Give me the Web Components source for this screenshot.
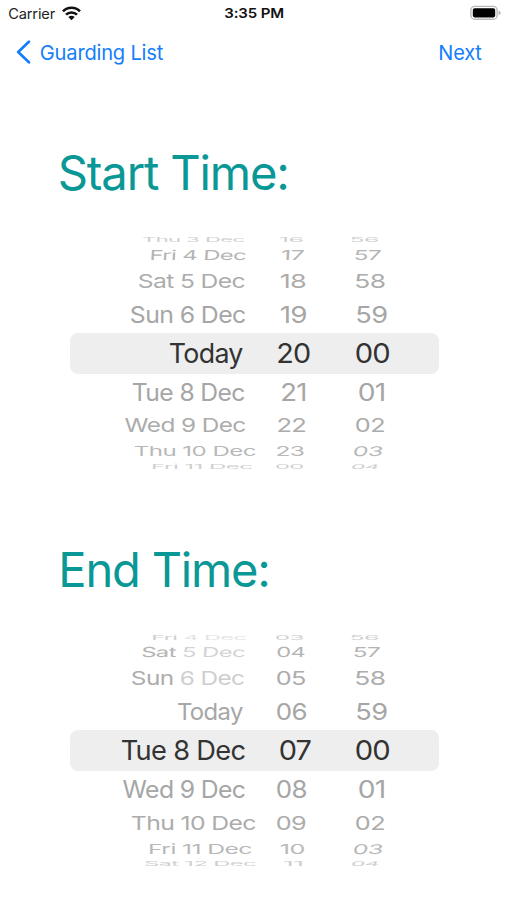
<!DOCTYPE html>
<html lang="en">
<head>
<meta charset="utf-8">
<title>Guarding time</title>
<style>
html,body{margin:0;background:#fff}
body{font-family:Inter,"Liberation Sans",sans-serif}
</style>
</head>
<body>
<time-screen></time-screen>
<script>
const ctx = document.createElement('canvas').getContext('2d');

/* One line of text, scaled so its ink spans the given width and its capitals the given height. */
class FitText extends HTMLElement {
  connectedCallback() {
    const w = +this.getAttribute('w'), h = +this.getAttribute('h');
    const weight = this.getAttribute('weight') || 400;
    const skew = +(this.getAttribute('skew') || 0);
    const fs = h > 21 ? 48 : h < 16 && this.hasAttribute('small') ? h / .727 : 27;
    const track = this.hasAttribute('small') ? -.01 : -.025;
    /* measured at ten times the size: ink bounds come back in whole pixels */
    ctx.font = `${weight} ${fs * 10}px Inter, "Liberation Sans", sans-serif`;
    ctx.letterSpacing = `${track * fs * 10}px`;
    const m = ctx.measureText(this.textContent);
    const left = -m.actualBoundingBoxLeft / 10, ink = m.actualBoundingBoxRight / 10 - left;
    const sx = w / ink, sy = h / (fs * .727);
    const asc = Math.round(.96875 * fs), desc = Math.round(.2412 * fs);
    const base = (fs - asc - desc) / 2 + asc;
    const root = this.attachShadow({mode: 'open'});
    root.innerHTML = `<style>
      :host{display:block;flex:none;width:${w}px;height:${h}px}
      span{display:block;width:max-content;white-space:pre;font-size:${fs}px;line-height:${fs}px;font-weight:${weight};letter-spacing:${track}em;
        transform-origin:${left}px ${base}px;
        transform:translate(${-left}px,${h - base + (fs < 15 ? 0 : .45)}px) scale(${sx},${sy}) skewX(${skew}deg)}
      ::slotted(b){font-weight:inherit;opacity:.58}
    </style><span><slot></slot></span>`;
  }
}
customElements.define('fit-text', FitText);

customElements.define('status-bar', class extends HTMLElement {
  connectedCallback() {
    this.attachShadow({mode: 'open'}).innerHTML = `<style>
      :host{display:grid;grid-template-columns:225px 1fr auto;height:28px;box-sizing:border-box;padding:0 5px 0 0;color:#111}
      .l{display:flex;padding:8.8px 0 0 9.3px;color:#222}
      .l svg{margin:-3px 0 0 6.5px}
      .c{padding-top:9.2px}
      .r{padding-top:5px}
      svg{display:block}
    </style>
    <div class="l"><fit-text small w="46" h="10.2">Carrier</fit-text>
      <svg width="19" height="15" viewBox="0 0 19 15" fill="none" stroke="#111" stroke-width="2.600">
        <path d="M1 5.3C5.6 .6 13.400 .6 18 5.3"/><path d="M4 8.700C7 5.700 12 5.700 15 8.700"/>
        <path d="M9.500 14.200L6.300 11Q9.500 8.600 12.700 11Z" fill="#111" stroke="none"/></svg></div>
    <div class="c"><fit-text small w="58" h="10" weight="600">3:35 PM</fit-text></div>
    <div class="r"><svg width="32" height="16" viewBox="0 0 32 16">
      <rect x=".9" y="1.400" width="26.200" height="12.800" rx="3.800" fill="#fff" stroke="#b9b9b9" stroke-width="1.400"/>
      <rect x="2.800" y="3.200" width="22.400" height="9.200" rx="1.800" fill="#000"/>
      <path d="M28.600 5.600Q30.600 6.400 30.600 7.900T28.600 10.200Z" fill="#b0b0b0"/></svg></div>`;
  }
});

customElements.define('nav-bar', class extends HTMLElement {
  connectedCallback() {
    this.attachShadow({mode: 'open'}).innerHTML = `<style>
      :host{display:flex;justify-content:space-between;height:48px;box-sizing:border-box;padding:17.2px 25.5px 0 16px;color:#147efb}
      .back{display:flex}
      svg{display:block;margin:-5px 9.300px 0 0}
    </style>
    <div class="back"><svg width="16" height="24" viewBox="0 0 16 24" fill="none" stroke="#147efb" stroke-width="2.700" stroke-linecap="round" stroke-linejoin="round"><path d="M12.900 1.800L2.200 12L12.900 22.200"/></svg>
    <fit-text small w="122" h="14.800">Guarding List</fit-text></div>
    <fit-text small w="41.500" h="14.800">Next</fit-text>`;
  }
});

/* Vertical extent and tint of each wheel row: [top, cap height, colour, skew], from the wheel's top. */
const ROWS = [
  [.2, 4.8, '#cfcfcf', 0], [12.8, 10, '#b4b4b4', -2], [36.4, 13.8, '#acacac', 0], [69, 17, '#a6a6a6', 0],
  [106, 19.600, '#333', 0],
  [145.700, 17.200, '#a6a6a6', 0], [181.100, 14, '#acacac', 0], [209.300, 9.700, '#b8b8b8', 0], [227, 4.600, '#cfcfcf', 0]
];
const MINUTES = [['56',351,378],['57',354.5,380],['58',356,384.5],['59',357,386.5],['00',356.3,389.5],['01',359.5,384.5],['02',356.5,384.5],['03',353,381],['04',351,377.5]];

customElements.define('time-wheel', class extends HTMLElement {
  set data({days, hours}) {
    let y = 0, html = '';
    ROWS.forEach(([top, h, color, skew], i) => {
      let x = 69.5;
      const cells = [days[i], hours[i], MINUTES[i]].map(([t, a, b], c) => {
        const gap = a - x; x = b;
        const s = c === 2 && i > 6 ? -7 : skew;
        return `<fit-text style="margin-left:${gap}px" w="${b - a}" h="${h}" skew="${s}">${t}</fit-text>`;
      }).join('');
      html += `<div class="row${i === 4 ? ' on' : ''}" style="margin-top:${top - y}px;height:${h}px;color:${color}">${cells}</div>`;
      y = top + h;
    });
    this.attachShadow({mode: 'open'}).innerHTML = `<style>
      :host{display:flow-root;position:relative;z-index:0;width:369px;height:232px;margin-left:69.500px}
      .row{display:flex;position:relative}
      .on::before{content:"";position:absolute;left:0;right:0;top:-10.300px;height:41.200px;border-radius:8px;background:#eee;z-index:-1}
    </style>${html}`;
  }
});

customElements.define('time-section', class extends HTMLElement {
  connectedCallback() {
    this.attachShadow({mode: 'open'}).innerHTML = `<style>
      :host{display:block;height:397.300px}
      .t{color:#0a9896;height:82px;box-sizing:border-box}
    </style><div class="t"><slot></slot></div><slot name="wheel"></slot>`;
  }
});

customElements.define('time-screen', class extends HTMLElement {
  connectedCallback() {
    const r = this.attachShadow({mode: 'open'});
    r.innerHTML = `<style>
      :host{display:block;width:507px;height:900px;overflow:hidden;background:#fff}
      time-section:first-of-type{margin-top:79.200px}
    </style>
    <status-bar></status-bar><nav-bar></nav-bar>
    <time-section><fit-text style="margin-left:60px" w="226.500" h="34.800">Start Time:</fit-text><time-wheel slot="wheel"></time-wheel></time-section>
    <time-section><fit-text style="margin-left:61.500px" w="205.500" h="34.800">End Time:</fit-text><time-wheel slot="wheel"></time-wheel></time-section>`;
    const [a, b] = r.querySelectorAll('time-wheel');
    a.data = {
      days: [['Thu 3 Dec',142.7,244],['Fri 4 Dec',150.5,245],['Sat 5 Dec',138.5,244],['Sun 6 Dec',130.5,244.7],['Today',170,243],['Tue 8 Dec',133.3,244.7],['Wed 9 Dec',124.5,244.7],['Thu 10 Dec',135,255.5],['Fri 11 Dec',153,252]],
      hours: [['16',280.5,303],['17',282,303.5],['18',281,305.3],['19',281,306],['20',278.3,310],['21',282,305.3],['22',278,305.3],['23',277.3,304],['00',276,303]]
    };
    b.data = {
      days: [['Fri <b>4 Dec</b>',153,246],['Sat <b>5 Dec</b>',141.5,244],['Sun <b>6 Dec</b>',132.3,244.3],['Today',177.5,242.5],['Tue 8 Dec',122,245],['Wed 9 Dec',122.7,244.7],['Thu 10 Dec',132,255.5],['Fri 11 Dec',150,251.5],['Sat 12 Dec',144.5,255]],
      hours: [['03',276,303],['04',276.5,303.7],['05',277,305.3],['06',277,306],['07',279.5,310.5],['08',277,306],['09',277,305.3],['10',281,304],['11',284,302]]
    };
  }
});
</script>
</body>
</html>
